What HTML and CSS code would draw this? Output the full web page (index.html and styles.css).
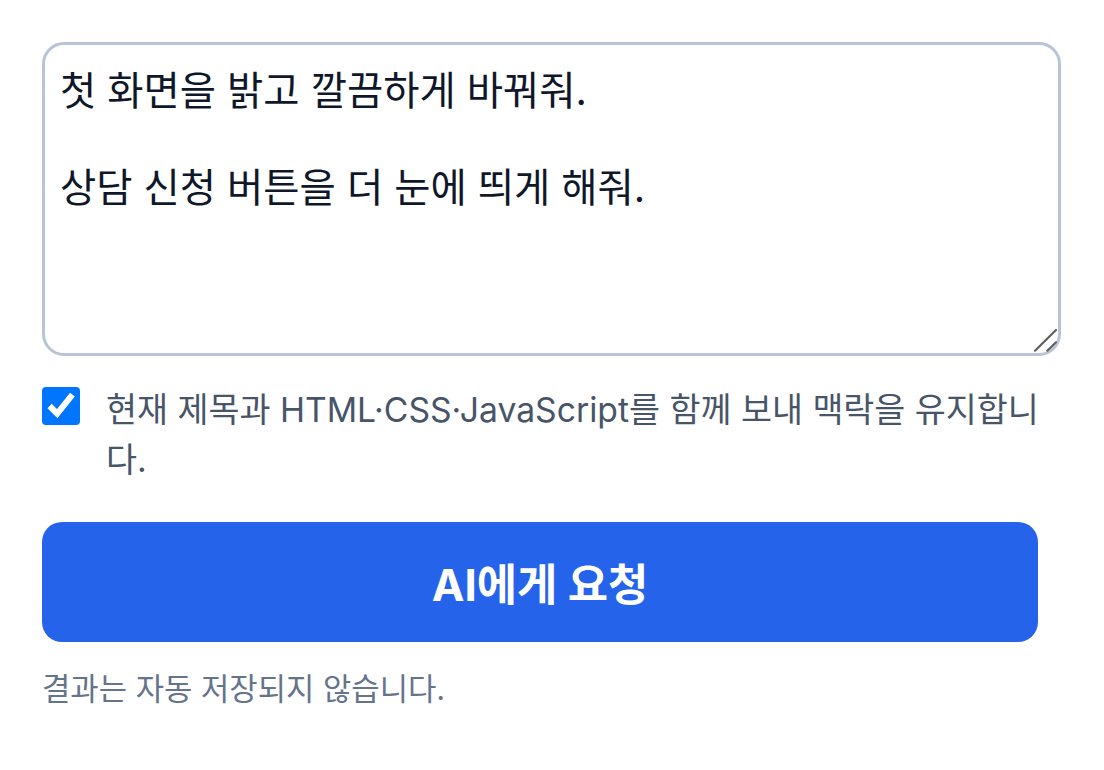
FILE: index.html
```html
<!DOCTYPE html>
<html lang="ko">
<head>
<meta charset="utf-8">
<title>AI 요청</title>
<link rel="stylesheet" href="styles.css">
</head>
<body>
<main class="panel">
  <div class="prompt-wrap">
    <textarea class="prompt" aria-label="요청 내용">첫 화면을 밝고 깔끔하게 바꿔줘.

상담 신청 버튼을 더 눈에 띄게 해줘.</textarea>
    <svg class="grip" width="16" height="16" viewBox="0 0 16 16" aria-hidden="true">
      <path d="M3 13.35 L13.5 3 M9.15 13.35 L13.5 9.15" />
    </svg>
  </div>
  <label class="context">
    <input type="checkbox" class="context-box" checked>
    <span class="context-text">현재 제목과 HTML·CSS·JavaScript를 함께 보내 맥락을 유지합니다.</span>
  </label>
  <button type="button" class="submit">AI에게 요청</button>
  <p class="note">결과는 자동 저장되지 않습니다.</p>
</main>
</body>
</html>
```

FILE: styles.css
```css
html {
  zoom: 2;
}

body {
  margin: 0;
  background: #ffffff;
  font-family: Inter, "Noto Sans CJK KR", sans-serif;
}

.panel {
  width: 498px;
  padding: 21px 0 0 21px;
  display: flex;
  flex-direction: column;
}

.prompt-wrap {
  position: relative;
  width: 509.5px;
  height: 157px;
}

.prompt {
  display: block;
  box-sizing: border-box;
  width: 100%;
  height: 100%;
  margin: 0;
  padding: 11px 7.5px;
  border: 1.5px solid #b8c4d6;
  border-radius: 11px;
  font-family: Inter, "Noto Sans CJK KR", sans-serif;
  font-size: 19.7px;
  line-height: 24.25px;
  color: #0f172a;
  background: #ffffff;
  outline: none;
  resize: none;
}

.grip {
  position: absolute;
  right: 0;
  bottom: 0;
  pointer-events: none;
}

.grip path {
  fill: none;
  stroke: #5f5f5f;
  stroke-width: 1.1;
  stroke-linecap: round;
}

.context {
  display: flex;
  align-items: flex-start;
  gap: 12.5px;
  margin: 14.5px -4px 0 0;
  font-size: 16.85px;
  line-height: 25px;
  color: #475569;
}

.context-box {
  flex: none;
  width: 19.5px;
  height: 19.5px;
  margin: 1px 0 0 0;
}

.submit {
  margin-top: 18.5px;
  height: 60px;
  border: 0;
  border-radius: 10px;
  background: #2563eb;
  color: #ffffff;
  font-family: Inter, "Noto Sans CJK KR", sans-serif;
  font-size: 21.9px;
  font-weight: 700;
}

.note {
  margin: 12px 0 0 0;
  font-size: 15.4px;
  line-height: 22.5px;
  color: #64748b;
}
```
